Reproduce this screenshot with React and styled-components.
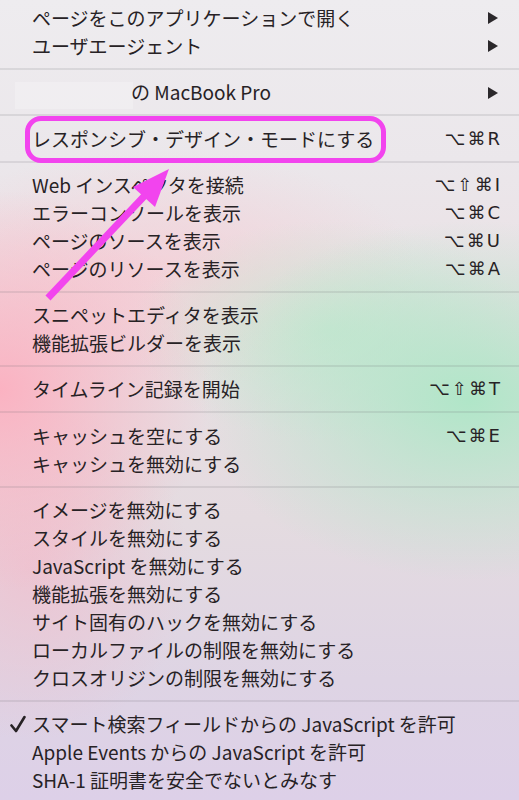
import React from 'react';
import styled, {createGlobalStyle, css} from 'styled-components';

const GlobalStyle = createGlobalStyle`
    html, body {
        margin: 0;
        padding: 0;
        background: #ece9ee;
    }
`;

const Menu = styled.div`
    position: relative;
    width: 519px;
    height: 800px;
    overflow: hidden;
    padding-top: 4px;
    box-sizing: border-box;
    font-family: "Noto Sans CJK JP", "Noto Sans", sans-serif;
    color: #272225;
    background:
        radial-gradient(ellipse 210px 200px at 0px 390px, rgba(252, 176, 192, 0.95), rgba(252, 176, 192, 0) 100%),
        radial-gradient(ellipse 160px 170px at 30px 570px, rgba(240, 190, 205, 0.75), rgba(240, 190, 205, 0) 100%),
        radial-gradient(ellipse 270px 180px at 470px 400px, rgba(176, 230, 200, 1), rgba(176, 230, 200, 0) 100%),
        radial-gradient(ellipse 200px 110px at 330px 330px, rgba(196, 232, 208, 0.8), rgba(196, 232, 208, 0) 100%),
        radial-gradient(ellipse 260px 120px at 160px 270px, rgba(245, 206, 214, 0.8), rgba(245, 206, 214, 0) 100%),
        linear-gradient(to bottom, #eeecef 0%, #ebe7eb 20%, #eadfe3 40%, #e4dbe0 65%, #ded4e4 85%, #ddd0e8 100%);
`;

const Separator = styled.div`
    height: 2px;
    margin: 8px 0 8.25px;
    background: rgba(110, 105, 112, 0.15);
`;

const Row = styled.div`
    display: grid;
    grid-template-columns: 24px 1fr auto;
    align-items: center;
    height: 28px;
    padding: 0 19px 0 8px;
    font-size: 19px;
    line-height: 28px;
`;

const CheckCell = styled.span`
    display: flex;
    align-items: center;
    justify-content: flex-start;
    padding-left: 2px;
`;

const Label = styled.span`
    position: relative;
    justify-self: start;
    white-space: nowrap;
    ${({$highlight}) => $highlight && css`
        &::before {
            content: "";
            position: absolute;
            top: -9px;
            bottom: -10px;
            left: -7px;
            right: -12px;
            border: 5px solid #f244ee;
            border-radius: 16px;
        }
    `}
`;

const Redacted = styled.span`
    display: inline-block;
    vertical-align: middle;
    width: 118px;
    height: 27px;
    margin-left: -17px;
    margin-right: -2px;
    background: rgba(255, 255, 255, 0.22);
`;

const Shortcut = styled.span`
    font-family: "DejaVu Sans", "Noto Sans", sans-serif;
    font-size: 18px;
    letter-spacing: 2px;
    margin-right: -2px;
    white-space: nowrap;
`;

const SubArrow = styled.span`
    width: 0;
    height: 0;
    margin-right: 2px;
    border-left: 10px solid #2b282b;
    border-top: 6px solid transparent;
    border-bottom: 6px solid transparent;
`;

const Overlay = styled.svg`
    position: absolute;
    left: 0;
    top: 0;
    pointer-events: none;
`;

const groups = [
    [
        {label: 'ページをこのアプリケーションで開く', sub: true},
        {label: 'ユーザエージェント', sub: true},
    ],
    [
        {label: 'の MacBook Pro', sub: true, redacted: true},
    ],
    [
        {label: 'レスポンシブ・デザイン・モードにする', keys: '⌥⌘R', highlight: true},
    ],
    [
        {label: 'Web インスペクタを接続', keys: '⌥⇧⌘I'},
        {label: 'エラーコンソールを表示', keys: '⌥⌘C'},
        {label: 'ページのソースを表示', keys: '⌥⌘U'},
        {label: 'ページのリソースを表示', keys: '⌥⌘A'},
    ],
    [
        {label: 'スニペットエディタを表示'},
        {label: '機能拡張ビルダーを表示'},
    ],
    [
        {label: 'タイムライン記録を開始', keys: '⌥⇧⌘T'},
    ],
    [
        {label: 'キャッシュを空にする', keys: '⌥⌘E'},
        {label: 'キャッシュを無効にする'},
    ],
    [
        {label: 'イメージを無効にする'},
        {label: 'スタイルを無効にする'},
        {label: 'JavaScript を無効にする'},
        {label: '機能拡張を無効にする'},
        {label: 'サイト固有のハックを無効にする'},
        {label: 'ローカルファイルの制限を無効にする'},
        {label: 'クロスオリジンの制限を無効にする'},
    ],
    [
        {label: 'スマート検索フィールドからの JavaScript を許可', checked: true},
        {label: 'Apple Events からの JavaScript を許可'},
        {label: 'SHA-1 証明書を安全でないとみなす'},
    ],
];

function CheckMark() {
    return (
        <svg width="16" height="18" viewBox="0 0 16 18">
            <path d="M1.5 10.5 L6 16 L14.5 2" fill="none" stroke="#272225" strokeWidth="2.6"
                  strokeLinecap="round" strokeLinejoin="round"/>
        </svg>
    );
}

function MenuRow({item}) {
    return (
        <Row>
            <CheckCell>{item.checked && <CheckMark/>}</CheckCell>
            <Label $highlight={item.highlight}>
                {item.redacted && <Redacted/>}
                {item.label}
            </Label>
            {item.sub && <SubArrow/>}
            {item.keys && <Shortcut>{item.keys}</Shortcut>}
        </Row>
    );
}

function App() {
    return (
        <>
            <GlobalStyle/>
            <Menu>
                {groups.map((group, gi) => (
                    <React.Fragment key={gi}>
                        {gi > 0 && <Separator/>}
                        {group.map((item) => <MenuRow key={item.label} item={item}/>)}
                    </React.Fragment>
                ))}
                <Overlay width="519" height="800">
                    <line x1="48" y1="298" x2="150" y2="190" stroke="#f244ee" strokeWidth="7"/>
                    <polygon points="169,169 133,187 155,207" fill="#f244ee"/>
                </Overlay>
            </Menu>
        </>
    );
}

export default App;
